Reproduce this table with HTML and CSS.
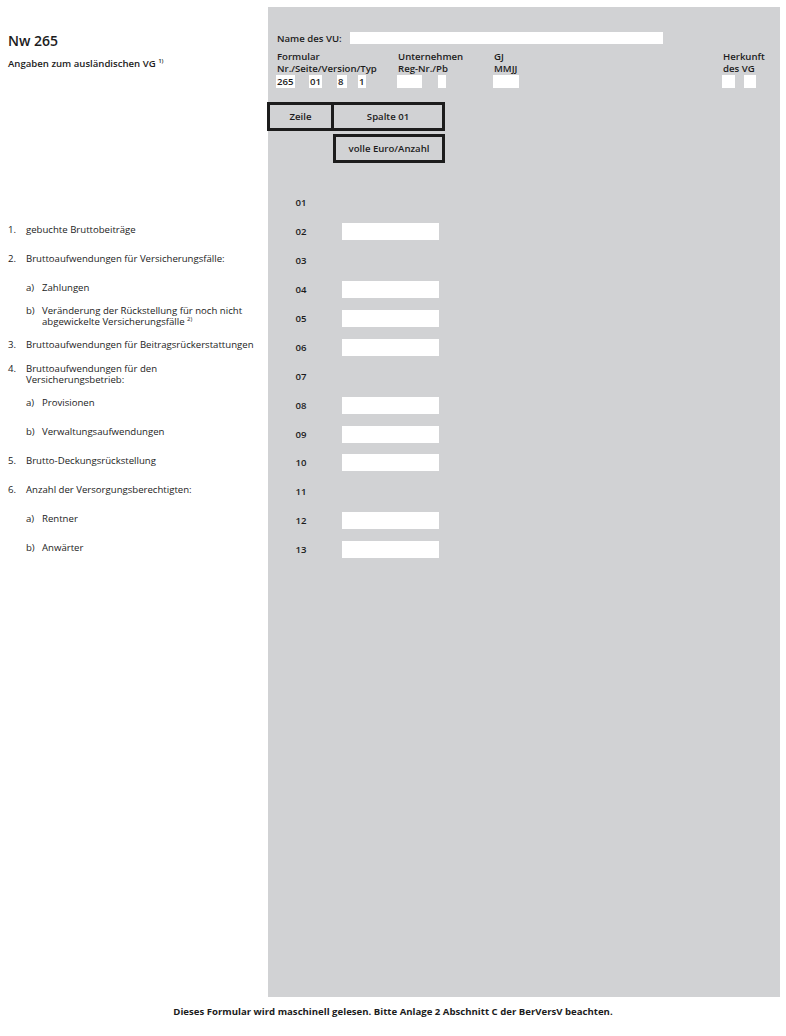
FILE: index.html
```html
<!DOCTYPE html>
<html lang="de">
<head>
  <meta charset="UTF-8">
  <meta name="viewport" content="width=device-width, initial-scale=1.0">
  <title>Nw 265</title>
  <link rel="stylesheet" href="styles.css">
</head>
<body>
  <div class="sheet">
    <div class="left">
      <h1 class="title">Nw 265</h1>
      <p class="subtitle">Angaben zum ausländischen VG <sup>1)</sup></p>

      <ul class="labels">
        <li class="label"></li>
        <li class="label"><div class="item"><span class="num">1.</span><span>gebuchte Bruttobeiträge</span></div></li>
        <li class="label"><div class="item"><span class="num">2.</span><span>Bruttoaufwendungen für Versicherungsfälle:</span></div></li>
        <li class="label sub"><div class="item"><span class="num">a)</span><span>Zahlungen</span></div></li>
        <li class="label sub"><div class="item"><span class="num">b)</span><span>Veränderung der Rückstellung für noch nicht<br>abgewickelte Versicherungsfälle <sup>2)</sup></span></div></li>
        <li class="label"><div class="item"><span class="num">3.</span><span>Bruttoaufwendungen für Beitragsrückerstattungen</span></div></li>
        <li class="label"><div class="item"><span class="num">4.</span><span>Bruttoaufwendungen für den<br>Versicherungsbetrieb:</span></div></li>
        <li class="label sub"><div class="item"><span class="num">a)</span><span>Provisionen</span></div></li>
        <li class="label sub"><div class="item"><span class="num">b)</span><span>Verwaltungsaufwendungen</span></div></li>
        <li class="label"><div class="item"><span class="num">5.</span><span>Brutto-Deckungsrückstellung</span></div></li>
        <li class="label"><div class="item"><span class="num">6.</span><span>Anzahl der Versorgungsberechtigten:</span></div></li>
        <li class="label sub"><div class="item"><span class="num">a)</span><span>Rentner</span></div></li>
        <li class="label sub"><div class="item"><span class="num">b)</span><span>Anwärter</span></div></li>
      </ul>
    </div>

    <div class="panel">
      <div class="vu-row">
        <span class="vu-label">Name des VU:</span>
        <span class="field vu-field"></span>
      </div>

      <div class="meta">
        <div class="meta-group formular">
          <div class="meta-head">Formular<br>Nr./Seite/Version/Typ</div>
          <div class="boxes">
            <span class="field val w19">265</span>
            <span class="field val w13">01</span>
            <span class="field val w10">8</span>
            <span class="field val w8">1</span>
          </div>
        </div>
        <div class="meta-group unternehmen">
          <div class="meta-head">Unternehmen<br>Reg-Nr./Pb</div>
          <div class="boxes">
            <span class="field val w25"></span>
            <span class="field val w8"></span>
          </div>
        </div>
        <div class="meta-group gj">
          <div class="meta-head">GJ<br>MMJJ</div>
          <div class="boxes">
            <span class="field val w26"></span>
          </div>
        </div>
        <div class="meta-group herkunft">
          <div class="meta-head">Herkunft<br>des VG</div>
          <div class="boxes">
            <span class="field val w13"></span>
            <span class="field val w12"></span>
          </div>
        </div>
      </div>

      <div class="col-head">
        <div class="head-box zeile">Zeile</div>
        <div class="head-box spalte">Spalte 01</div>
      </div>
      <div class="col-unit">
        <div class="head-box unit">volle Euro/Anzahl</div>
      </div>

      <ul class="rows">
        <li class="row"><span class="line">01</span></li>
        <li class="row"><span class="line">02</span><span class="field input"></span></li>
        <li class="row"><span class="line">03</span></li>
        <li class="row"><span class="line">04</span><span class="field input"></span></li>
        <li class="row"><span class="line">05</span><span class="field input"></span></li>
        <li class="row"><span class="line">06</span><span class="field input"></span></li>
        <li class="row"><span class="line">07</span></li>
        <li class="row"><span class="line">08</span><span class="field input"></span></li>
        <li class="row"><span class="line">09</span><span class="field input"></span></li>
        <li class="row"><span class="line">10</span><span class="field input"></span></li>
        <li class="row"><span class="line">11</span></li>
        <li class="row"><span class="line">12</span><span class="field input"></span></li>
        <li class="row"><span class="line">13</span><span class="field input"></span></li>
      </ul>
    </div>
  </div>

  <p class="footer">Dieses Formular wird maschinell gelesen. Bitte Anlage 2 Abschnitt C der BerVersV beachten.</p>
</body>
</html>
```

FILE: styles.css
```css
body {
  margin: 0;
  font-family: 'Open Sans', 'DejaVu Sans', sans-serif;
  font-size: 9.6px;
  color: #1c1c1c;
  background: #fff;
}

ul {
  list-style: none;
  margin: 0;
  padding: 0;
}

sup {
  font-size: 6px;
  vertical-align: 4px;
  line-height: 0;
}

.sheet {
  display: flex;
  margin-top: 7px;
}

/* linke Spalte mit Beschriftungen */
.left {
  width: 260px;
  padding-left: 8px;
}

.title {
  margin: 25px 0 0;
  font-size: 14px;
  line-height: 17px;
  font-weight: 600;
}

.subtitle {
  margin: 9px 0 0;
  font-weight: 600;
  line-height: 12px;
}

.labels {
  margin-top: 116px;
}

.label {
  display: flex;
  align-items: center;
  height: 28.9px;
  line-height: 11px;
}

.item {
  display: flex;
}

.label .num {
  width: 18px;
  flex: none;
}

.label.sub {
  padding-left: 18px;
}

.label.sub .num {
  width: 16px;
}

/* graues Formularfeld */
.panel {
  width: 503px;
  height: 990px;
  padding-left: 9px;
  background: #d1d2d4;
  font-weight: 600;
}

.field {
  display: inline-block;
  background: #fff;
}

.vu-row {
  display: flex;
  align-items: center;
  margin-top: 25px;
  height: 12px;
}

.vu-label {
  width: 73px;
}

.vu-field {
  width: 313px;
  height: 12px;
}

.meta {
  display: flex;
  margin-top: 7px;
}

.meta-head {
  line-height: 12px;
}

.boxes {
  display: flex;
  margin-left: -1px;
}

.val {
  height: 13px;
  line-height: 13px;
  padding-left: 1px;
  box-sizing: border-box;
}

.w8 { width: 8px; }
.w10 { width: 10px; }
.w12 { width: 12px; }
.w13 { width: 13px; }
.w19 { width: 19px; }
.w25 { width: 25px; }
.w26 { width: 26px; }

.formular .val:nth-child(1) { margin-right: 14px; }
.formular .val:nth-child(2) { margin-right: 15px; }
.formular .val:nth-child(3) { margin-right: 11px; }
.unternehmen .val:nth-child(1) { margin-right: 16px; }
.herkunft .val:nth-child(1) { margin-right: 9px; }

.formular { width: 121px; }
.unternehmen { width: 96px; }
.gj { width: 229px; }

.col-head {
  display: flex;
  margin: 14px 0 0 -10px;
}

.head-box {
  height: 23px;
  line-height: 23px;
  border: 3px solid #1c1c1c;
  text-align: center;
}

.zeile {
  width: 61px;
}

.spalte {
  width: 108px;
  border-left: none;
}

.col-unit {
  display: flex;
  margin: 3px 0 0 56px;
}

.unit {
  width: 106px;
}

.rows {
  margin: 25.5px 0 0 -10px;
}

.row {
  display: flex;
  align-items: center;
  height: 28.9px;
}

.line {
  width: 67px;
  text-align: center;
  padding-left: 1px;
  box-sizing: border-box;
}

.input {
  width: 97px;
  height: 17px;
  margin-left: 8px;
}

.footer {
  margin: 8px 0 0;
  text-align: center;
  font-weight: bold;
}
```
